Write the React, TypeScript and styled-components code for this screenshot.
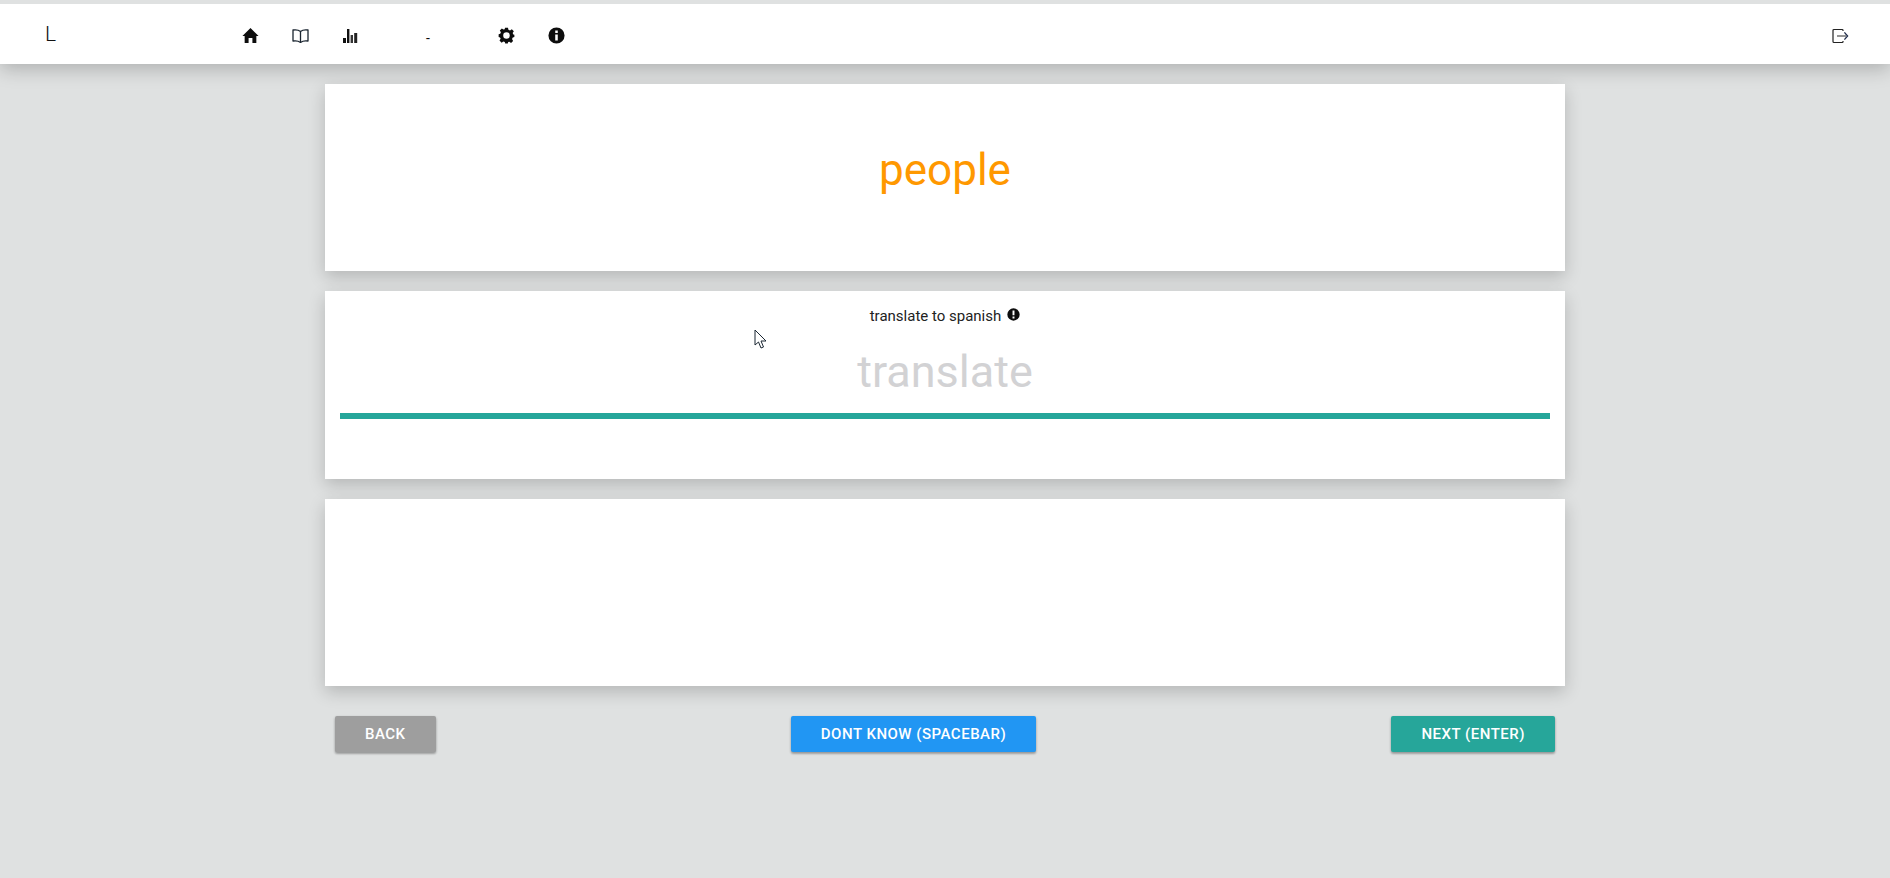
import React from "react";
import styled, { createGlobalStyle } from "styled-components";

const GlobalStyle = createGlobalStyle`
  html, body {
    margin: 0;
    padding: 0;
    height: 100%;
    overflow: hidden;
    background: #dfe1e1;
    font-family: Roboto, "Liberation Sans", sans-serif;
  }
`;

const Page = styled.div`
  position: relative;
  min-height: 878px;
  background: #dfe1e1;
`;

const TopStrip = styled.div`
  position: relative;
  z-index: 1;
  height: 4px;
  background: #dfe1e1;
`;

const Navbar = styled.nav`
  display: flex;
  align-items: center;
  height: 60px;
  padding-top: 3px;
  box-sizing: border-box;
  background: #fff;
  box-shadow: 0 5px 18px rgba(0, 0, 0, 0.22);
`;

const Logo = styled.span`
  width: 225px;
  padding-left: 45px;
  box-sizing: border-box;
  margin-top: -4px;
  font-size: 21px;
  font-weight: 300;
  color: #111;
`;

const NavItem = styled.a<{ $width?: number; $size?: number }>`
  display: flex;
  justify-content: center;
  align-items: center;
  width: ${p => p.$width ?? 50}px;
  height: 50px;
  color: #0d0d0d;
  font-size: ${p => p.$size ?? 17}px;
`;

const DashItem = styled(NavItem)`
  padding-top: 5px;
  box-sizing: border-box;
`;

const NavSpacer = styled.div`
  flex: 1;
`;

const LogoutItem = styled(NavItem)`
  margin-right: 40px;
  width: 20px;
`;

const Main = styled.main`
  width: 1240px;
  margin: 20px auto 0;
  display: flex;
  flex-direction: column;
  gap: 20px;
`;

const Card = styled.section`
  height: 187px;
  background: #fff;
  box-shadow: 0 6px 16px rgba(0, 0, 0, 0.19);
  box-sizing: border-box;
`;

const WordCard = styled(Card)`
  display: flex;
  justify-content: center;
  padding-top: 60px;
`;

const Word = styled.h1`
  margin: 0;
  font-size: 44px;
  font-weight: 400;
  line-height: 52px;
  color: #ff9800;
`;

const AnswerCard = styled(Card)`
  height: 188px;
  padding: 15px 15px 0;
`;

const Hint = styled.div`
  display: flex;
  justify-content: center;
  align-items: flex-start;
  gap: 6px;
  font-size: 15px;
  line-height: 20px;
  color: #222;
`;

const HintIcon = styled.svg`
  margin-top: 2px;
  color: #0d0d0d;
`;

const AnswerInput = styled.input`
  display: block;
  width: 100%;
  height: 84px;
  margin-top: 9px;
  padding: 0 0 6px;
  box-sizing: border-box;
  border: 0;
  border-bottom: 6px solid #26a69a;
  outline: none;
  background: transparent;
  text-align: center;
  font-family: inherit;
  font-size: 45px;
  color: #222;

  &::placeholder {
    color: #d2d2d4;
    opacity: 1;
  }
`;

const Actions = styled.div`
  display: flex;
  justify-content: space-between;
  padding: 10px 10px 0;
`;

const Button = styled.button<{ $color: string }>`
  height: 36px;
  padding: 0 30px;
  border: 0;
  border-radius: 2px;
  background: ${p => p.$color};
  color: #fff;
  font-family: inherit;
  font-size: 15px;
  font-weight: 500;
  letter-spacing: 0.5px;
  text-transform: uppercase;
  box-shadow: 0 2px 2px rgba(0, 0, 0, 0.2), 0 1px 3px rgba(0, 0, 0, 0.2);
`;

const Pointer = styled.svg`
  position: absolute;
  left: 754px;
  top: 329px;
`;

const Icon = styled.svg`
  display: block;
`;

const HomeIcon = () => (
  <Icon width="17" height="17" viewBox="0 0 16 16">
    <path fill="currentColor" d="M8 1 L15.6 8.4 L13.5 8.4 L13.5 15 L9.8 15 L9.8 10.4 L6.2 10.4 L6.2 15 L2.5 15 L2.5 8.4 L0.4 8.4 Z" />
  </Icon>
);

const BookIcon = () => (
  <Icon width="17" height="16" viewBox="0 0 17 16">
    <path fill="none" stroke="#1a2530" strokeWidth="1.3" strokeLinejoin="round" d="M8.5 3.4 C6.5 1.8 3.5 1.6 1 2 L1 13 C3.5 12.6 6.5 12.9 8.5 14.4 C10.5 12.9 13.5 12.6 16 13 L16 2 C13.5 1.6 10.5 1.8 8.5 3.4 Z M8.5 3.4 L8.5 14.4" />
  </Icon>
);

const BarsIcon = () => (
  <Icon width="15" height="16" viewBox="0 0 15 16">
    <rect x="0" y="10" width="3" height="5" fill="#111" />
    <rect x="4" y="1" width="2.4" height="14" fill="#111" />
    <rect x="7.6" y="7" width="2.4" height="8" fill="#333" />
    <rect x="11.2" y="5" width="3" height="10" fill="#222" />
  </Icon>
);

const GearIcon = () => (
  <Icon width="17" height="17" viewBox="0 0 16 16">
    <path fill="currentColor" fillRule="evenodd" d="M6.6 0.6 H9.4 L9.8 2.5 L11.3 3.2 L13 2.1 L14.9 4 L13.8 5.7 L14.4 7.1 L15.4 7.4 V9.4 L13.9 9.9 L13.2 11.4 L14.2 13.1 L12.3 15 L10.6 13.9 L9.6 14.2 L9.2 15.6 H6.8 L6.4 14.2 L5 13.7 L3.4 14.8 L1.4 12.8 L2.5 11.1 L1.9 9.8 L0.6 9.4 V6.9 L2.1 6.4 L2.7 5 L1.7 3.3 L3.6 1.4 L5.2 2.4 L6.3 2 Z M8 4.9 A3.1 3.1 0 1 0 8 11.1 A3.1 3.1 0 1 0 8 4.9 Z" />
  </Icon>
);

const InfoIcon = () => (
  <Icon width="17" height="17" viewBox="0 0 16 16">
    <path fill="currentColor" fillRule="evenodd" d="M8 0.4 A7.6 7.6 0 1 0 8 15.6 A7.6 7.6 0 1 0 8 0.4 Z M6.8 3.4 H9.2 V5.6 H6.8 Z M6.8 7 H9.2 V12.6 H6.8 Z" />
  </Icon>
);

const LogoutIcon = () => (
  <Icon width="17" height="16" viewBox="0 0 17 16">
    <path fill="none" stroke="#222" strokeWidth="1.2" d="M11 3 V2.2 Q11 1.5 10.2 1.5 H2 Q1 1.5 1 2.5 V13.5 Q1 14.5 2 14.5 H10.2 Q11 14.5 11 13.8 V13" />
    <path fill="none" stroke="#8a8a8a" strokeWidth="1.8" d="M5 8 H14" />
    <path fill="none" stroke="#1f2c4a" strokeWidth="1.3" d="M12.4 4.4 L15.6 8 L12.4 11.6" />
  </Icon>
);

export default function App() {
  return (
    <Page>
      <GlobalStyle />
      <TopStrip />
      <Navbar>
        <Logo>L</Logo>
        <NavItem><HomeIcon /></NavItem>
        <NavItem><BookIcon /></NavItem>
        <NavItem><BarsIcon /></NavItem>
        <DashItem $width={106} $size={14}>-</DashItem>
        <NavItem><GearIcon /></NavItem>
        <NavItem><InfoIcon /></NavItem>
        <NavSpacer />
        <LogoutItem><LogoutIcon /></LogoutItem>
      </Navbar>
      <Main>
        <WordCard>
          <Word>people</Word>
        </WordCard>
        <AnswerCard>
          <Hint>
            translate to spanish
            <HintIcon width="13" height="13" viewBox="0 0 16 16">
              <path fill="currentColor" fillRule="evenodd" d="M8 0.4 A7.6 7.6 0 1 0 8 15.6 A7.6 7.6 0 1 0 8 0.4 Z M6.8 3.2 H9.2 V9 H6.8 Z M6.8 10.4 H9.2 V12.8 H6.8 Z" />
            </HintIcon>
          </Hint>
          <AnswerInput placeholder="translate" />
        </AnswerCard>
        <Card />
        <Actions>
          <Button $color="#9e9e9e">Back</Button>
          <Button $color="#2196f3">Dont know (spacebar)</Button>
          <Button $color="#26a69a">Next (enter)</Button>
        </Actions>
      </Main>
      <Pointer width="14" height="21" viewBox="0 0 14 21">
        <path d="M1 1 L1 16 L4.5 13 L7 19 L9.5 18 L7 12 L12 12 Z" fill="#fff" stroke="#1b2733" strokeWidth="1" />
      </Pointer>
    </Page>
  );
}
